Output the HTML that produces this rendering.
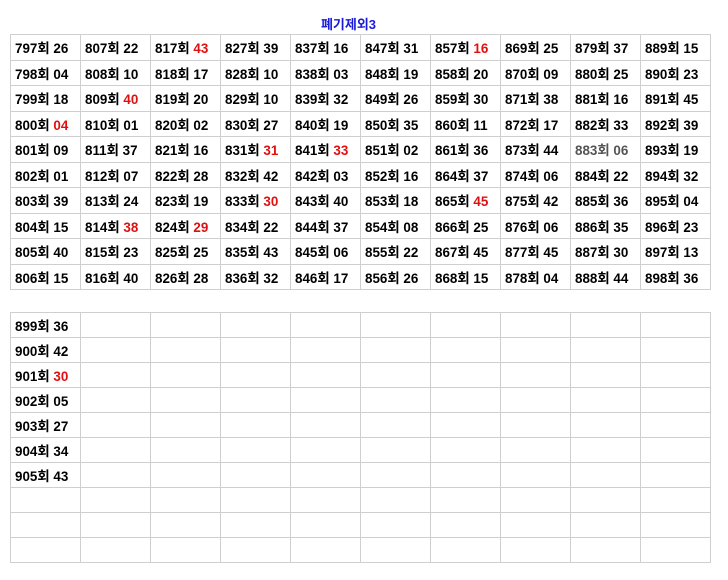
<!DOCTYPE html>
<html><head><meta charset="utf-8"><style>
body{margin:0;background:#fff;width:728px;height:580px;position:relative;font-family:"Liberation Sans","Noto Sans CJK KR",sans-serif;}
.t{position:absolute;left:0px;top:14px;width:697px;text-align:center;color:#1a1adb;font-weight:bold;font-size:13px;}
table{position:absolute;left:10px;border-collapse:collapse;table-layout:fixed;width:701px;}
td{border:1px solid #cfcfcf;padding:0 0 0 4px;font-weight:bold;font-size:13.4px;color:#000;white-space:nowrap;overflow:hidden;}
#a{top:34px}#a td{height:24.5px}
#b{top:312px}#b td{height:24px}
.r{color:#e01010}.g{color:#555}
</style></head><body>
<div class="t">폐기제외3</div>
<table id="a">
<tr><td>797회 26</td><td>807회 22</td><td>817회 <span class="r">43</span></td><td>827회 39</td><td>837회 16</td><td>847회 31</td><td>857회 <span class="r">16</span></td><td>869회 25</td><td>879회 37</td><td>889회 15</td></tr>
<tr><td>798회 04</td><td>808회 10</td><td>818회 17</td><td>828회 10</td><td>838회 03</td><td>848회 19</td><td>858회 20</td><td>870회 09</td><td>880회 25</td><td>890회 23</td></tr>
<tr><td>799회 18</td><td>809회 <span class="r">40</span></td><td>819회 20</td><td>829회 10</td><td>839회 32</td><td>849회 26</td><td>859회 30</td><td>871회 38</td><td>881회 16</td><td>891회 45</td></tr>
<tr><td>800회 <span class="r">04</span></td><td>810회 01</td><td>820회 02</td><td>830회 27</td><td>840회 19</td><td>850회 35</td><td>860회 11</td><td>872회 17</td><td>882회 33</td><td>892회 39</td></tr>
<tr><td>801회 09</td><td>811회 37</td><td>821회 16</td><td>831회 <span class="r">31</span></td><td>841회 <span class="r">33</span></td><td>851회 02</td><td>861회 36</td><td>873회 44</td><td class="g">883회 06</td><td>893회 19</td></tr>
<tr><td>802회 01</td><td>812회 07</td><td>822회 28</td><td>832회 42</td><td>842회 03</td><td>852회 16</td><td>864회 37</td><td>874회 06</td><td>884회 22</td><td>894회 32</td></tr>
<tr><td>803회 39</td><td>813회 24</td><td>823회 19</td><td>833회 <span class="r">30</span></td><td>843회 40</td><td>853회 18</td><td>865회 <span class="r">45</span></td><td>875회 42</td><td>885회 36</td><td>895회 04</td></tr>
<tr><td>804회 15</td><td>814회 <span class="r">38</span></td><td>824회 <span class="r">29</span></td><td>834회 22</td><td>844회 37</td><td>854회 08</td><td>866회 25</td><td>876회 06</td><td>886회 35</td><td>896회 23</td></tr>
<tr><td>805회 40</td><td>815회 23</td><td>825회 25</td><td>835회 43</td><td>845회 06</td><td>855회 22</td><td>867회 45</td><td>877회 45</td><td>887회 30</td><td>897회 13</td></tr>
<tr><td>806회 15</td><td>816회 40</td><td>826회 28</td><td>836회 32</td><td>846회 17</td><td>856회 26</td><td>868회 15</td><td>878회 04</td><td>888회 44</td><td>898회 36</td></tr>
</table>
<table id="b">
<tr><td>899회 36</td><td></td><td></td><td></td><td></td><td></td><td></td><td></td><td></td><td></td></tr>
<tr><td>900회 42</td><td></td><td></td><td></td><td></td><td></td><td></td><td></td><td></td><td></td></tr>
<tr><td>901회 <span class="r">30</span></td><td></td><td></td><td></td><td></td><td></td><td></td><td></td><td></td><td></td></tr>
<tr><td>902회 05</td><td></td><td></td><td></td><td></td><td></td><td></td><td></td><td></td><td></td></tr>
<tr><td>903회 27</td><td></td><td></td><td></td><td></td><td></td><td></td><td></td><td></td><td></td></tr>
<tr><td>904회 34</td><td></td><td></td><td></td><td></td><td></td><td></td><td></td><td></td><td></td></tr>
<tr><td>905회 43</td><td></td><td></td><td></td><td></td><td></td><td></td><td></td><td></td><td></td></tr>
<tr><td></td><td></td><td></td><td></td><td></td><td></td><td></td><td></td><td></td><td></td></tr>
<tr><td></td><td></td><td></td><td></td><td></td><td></td><td></td><td></td><td></td><td></td></tr>
<tr><td></td><td></td><td></td><td></td><td></td><td></td><td></td><td></td><td></td><td></td></tr>
</table>
</body></html>
